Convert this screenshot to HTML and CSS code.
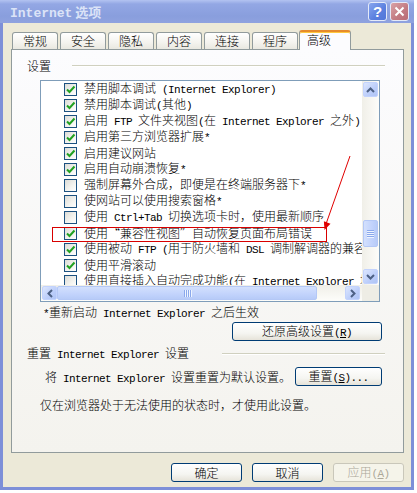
FILE: index.html
```html
<!DOCTYPE html>
<html>
  <head>
    <meta charset="UTF-8" />
    <title>Internet 选项</title>
    <link rel="stylesheet" href="styles.css">
  </head>
  <body>
    <div class="window">
      <div class="titlebar">
        <span class="title"><span class="title-en">Internet</span> 选项</span>
        <span class="cap-btn cap-help">?</span>
        <span class="cap-btn cap-close">
          <svg width="11" height="11" viewBox="0 0 11 11"><path d="M1.5 1.5 L9.5 9.5 M9.5 1.5 L1.5 9.5" stroke="#fff" stroke-width="2" /></svg>
        </span>
      </div>

      <div class="client">
        <div class="tabs">
          <div class="tab">常规</div>
          <div class="tab">安全</div>
          <div class="tab">隐私</div>
          <div class="tab">内容</div>
          <div class="tab">连接</div>
          <div class="tab">程序</div>
          <div class="tab tab-active">高级</div>
        </div>

        <div class="page">
          <div class="group-head">
            <span>设置</span>
            <i class="etch etch-long"></i>
          </div>

          <div class="listbox">
            <div class="items">
              <div class="item"><span class="chk"><svg viewBox="0 0 11 11"><path d="M2 5.5 L4.5 8 L9.5 2.5" /></svg></span><span>禁用脚本调试<span class="en"> (Internet Explorer)</span></span></div>
              <div class="item"><span class="chk"><svg viewBox="0 0 11 11"><path d="M2 5.5 L4.5 8 L9.5 2.5" /></svg></span><span>禁用脚本调试<span class="en">(</span>其他<span class="en">)</span></span></div>
              <div class="item"><span class="chk"><svg viewBox="0 0 11 11"><path d="M2 5.5 L4.5 8 L9.5 2.5" /></svg></span><span>启用<span class="en"> FTP </span>文件夹视图<span class="en">(</span>在<span class="en"> Internet Explorer </span>之外<span class="en">)</span></span></div>
              <div class="item"><span class="chk"><svg viewBox="0 0 11 11"><path d="M2 5.5 L4.5 8 L9.5 2.5" /></svg></span><span>启用第三方浏览器扩展<span class="en">*</span></span></div>
              <div class="item"><span class="chk"><svg viewBox="0 0 11 11"><path d="M2 5.5 L4.5 8 L9.5 2.5" /></svg></span><span>启用建议网站</span></div>
              <div class="item"><span class="chk"><svg viewBox="0 0 11 11"><path d="M2 5.5 L4.5 8 L9.5 2.5" /></svg></span><span>启用自动崩溃恢复<span class="en">*</span></span></div>
              <div class="item"><span class="chk"></span><span>强制屏幕外合成，即便是在终端服务器下<span class="en">*</span></span></div>
              <div class="item"><span class="chk"></span><span>使网站可以使用搜索窗格<span class="en">*</span></span></div>
              <div class="item"><span class="chk"></span><span>使用<span class="en"> Ctrl+Tab </span>切换选项卡时，使用最新顺序</span></div>
              <div class="item"><span class="chk"><svg viewBox="0 0 11 11"><path d="M2 5.5 L4.5 8 L9.5 2.5" /></svg></span><span>使用“兼容性视图”自动恢复页面布局错误</span></div>
              <div class="item"><span class="chk"><svg viewBox="0 0 11 11"><path d="M2 5.5 L4.5 8 L9.5 2.5" /></svg></span><span>使用被动<span class="en"> FTP (</span>用于防火墙和<span class="en"> DSL </span>调制解调器的兼容性<span class="en">)</span></span></div>
              <div class="item"><span class="chk"><svg viewBox="0 0 11 11"><path d="M2 5.5 L4.5 8 L9.5 2.5" /></svg></span><span>使用平滑滚动</span></div>
              <div class="item"><span class="chk"></span><span>使用直接插入自动完成功能<span class="en">(</span>在<span class="en"> Internet Explorer </span>地址栏和打开对话框中<span class="en">)</span></span></div>
            </div>

            <div class="vscroll">
              <span class="sb-btn">
                <svg width="9" height="6" viewBox="0 0 9 6"><path d="M1 5 L4.5 1.5 L8 5" /></svg>
              </span>
              <span class="vthumb"><i></i><i></i><i></i><i></i></span>
              <span class="sb-btn sb-end">
                <svg width="9" height="6" viewBox="0 0 9 6"><path d="M1 1 L4.5 4.5 L8 1" /></svg>
              </span>
            </div>
            <div class="hscroll">
              <span class="sb-btn">
                <svg width="6" height="9" viewBox="0 0 6 9"><path d="M5 1 L1.5 4.5 L5 8" /></svg>
              </span>
              <span class="hthumb"><i></i><i></i><i></i><i></i></span>
              <span class="sb-btn sb-end">
                <svg width="6" height="9" viewBox="0 0 6 9"><path d="M1 1 L4.5 4.5 L1 8" /></svg>
              </span>
            </div>
            <div class="corner"></div>
          </div>

          <div class="note"><span class="en">*</span>重新启动<span class="en"> Internet Explorer </span>之后生效</div>

          <div class="btn-row restore-row">
            <button class="xp-btn btn-restore">还原高级设置<span class="en">(<u>R</u>)</span></button>
          </div>

          <div class="group-head reset-head">
            <span>重置<span class="en"> Internet Explorer </span>设置</span>
            <i class="etch etch-short"></i>
          </div>

          <div class="btn-row reset-row">
            <span class="reset-text">将<span class="en"> Internet Explorer </span>设置重置为默认设置。</span>
            <button class="xp-btn btn-reset">重置<span class="en">(<u>S</u>)...</span></button>
          </div>

          <div class="hint">仅在浏览器处于无法使用的状态时，才使用此设置。</div>

          <svg class="marks" width="392" height="402" viewBox="0 0 392 402">
            <rect x="40.5" y="177.5" width="274" height="14" fill="none" stroke="#d80000" />
            <path d="M338 106 L314 174" stroke="#e00000" stroke-width="1" />
            <polygon points="312.5,180 318.5,173.7 311.9,171.3" fill="#e00000" />
          </svg>
        </div>

        <div class="dlg-btns">
          <button class="xp-btn dlg-btn">确定</button>
          <button class="xp-btn dlg-btn">取消</button>
          <button class="xp-btn dlg-btn" disabled>应用<span class="en">(<u>A</u>)</span></button>
        </div>
      </div>
    </div>
  </body>
</html>
```

FILE: styles.css
```css
body {
  margin: 0;
  background: #fff;
  font-family: "Noto Sans CJK SC", sans-serif;
  font-size: 12px;
  font-weight: 300;
  color: #000;
}

/* latin runs: monospace 6px cells like the old song font */
.en {
  font-family: "Liberation Mono", monospace;
  font-size: 11px;
  font-weight: normal;
  letter-spacing: -0.6px;
}

.window {
  width: 414px;
  height: 490px;
  background: #7d8fd8;
  display: flex;
  flex-direction: column;
}

.titlebar {
  height: 23px;
  flex-shrink: 0;
  display: flex;
  align-items: center;
  gap: 3px;
  padding: 0 5px 0 10px;
  background: linear-gradient(#b3c3f1, #93a7e4 4px, #899edd 70%, #8fa2df);
}
.title {
  flex: 1;
  color: #dbe3f7;
  font-size: 13px;
  font-weight: bold;
}
.title-en {
  font-family: "Liberation Mono", monospace;
}
.cap-btn {
  width: 19px;
  height: 19px;
  box-sizing: border-box;
  border: 1px solid #e4eaf9;
  border-radius: 3px;
  display: flex;
  align-items: center;
  justify-content: center;
  color: #fff;
  font-family: "Liberation Sans", sans-serif;
  font-weight: bold;
  font-size: 15px;
}
.cap-help {
  background: linear-gradient(135deg, #88a6ee, #5a7fdf 60%, #5276d8);
}
.cap-close {
  background: linear-gradient(135deg, #d9a2a6, #c27a82 60%, #b96d76);
}

.client {
  flex: 1;
  margin: 0 3px 3px;
  padding: 7px 7px 5px 8px;
  background: #ece9d8;
  display: flex;
  flex-direction: column;
}

.tabs {
  display: flex;
  gap: 2px;
  height: 20px;
  margin: 0 0 -1px 1px;
  position: relative;
  z-index: 1;
}
.tab {
  width: 46px;
  height: 17px;
  margin-top: 2px;
  box-sizing: border-box;
  border: 1px solid #919b9c;
  border-bottom: none;
  border-radius: 3px 3px 0 0;
  background: linear-gradient(#fff, #f4f3ee 60%, #e9e8e0);
  text-align: center;
  line-height: 16px;
}
.tab-active {
  width: 52px;
  height: 20px;
  margin-top: 0;
  margin-left: -1px;
  border-top: 2px solid #e68b2c;
  box-shadow: inset 0 1px #ffc83c;
  background: #fcfcfe;
  text-align: left;
  padding-left: 7px;
}

.page {
  height: 404px;
  box-sizing: border-box;
  border: 1px solid #919b9c;
  background: linear-gradient(#fcfcfe, #f4f3ee);
  position: relative;
}

.group-head {
  display: flex;
  align-items: center;
  height: 16px;
  line-height: 16px;
  margin: 8px 18px 0 0;
  padding-left: 15px;
}
.etch {
  margin-left: auto;
  height: 0;
  border-top: 1px solid #d0d0bf;
  border-bottom: 1px solid #fff;
}
.etch-long {
  width: 313px;
}
.etch-short {
  width: 163px;
}

.listbox {
  width: 340px;
  height: 222px;
  margin: 6px 0 0 28px;
  box-sizing: border-box;
  border: 1px solid #7f9db9;
  background: #fff;
  display: grid;
  grid-template-columns: 1fr 17px;
  grid-template-rows: 1fr 16px;
}
.items {
  overflow: hidden;
  white-space: nowrap;
}
.item {
  display: flex;
  align-items: center;
  gap: 7px;
  height: 16px;
  line-height: 16px;
  padding-left: 23px;
}
.chk {
  width: 13px;
  height: 13px;
  flex-shrink: 0;
  box-sizing: border-box;
  border: 1px solid #1c5180;
  background: linear-gradient(135deg, #dcdcd7, #f4f4f0 60%, #fff);
}
.chk svg {
  display: block;
  width: 11px;
  height: 11px;
  fill: none;
  stroke: #21a121;
  stroke-width: 2;
}

.vscroll {
  display: flex;
  flex-direction: column;
  padding: 1px;
  background: linear-gradient(to right, #f0efe8, #fdfdfa);
}
.hscroll {
  display: flex;
  padding: 1px;
  background: linear-gradient(#f0efe8, #fdfdfa);
}
.corner {
  background: #eeede5;
}
.sb-btn {
  width: 15px;
  height: 15px;
  box-sizing: border-box;
  border: 1px solid #c3d3fd;
  border-radius: 2px;
  background: linear-gradient(135deg, #dce6fe, #bccefa 60%, #afc4f5);
  display: flex;
  align-items: center;
  justify-content: center;
  flex-shrink: 0;
}
.hscroll .sb-btn {
  height: 14px;
}
.sb-btn svg {
  fill: none;
  stroke: #4d6185;
  stroke-width: 2;
}
.sb-end {
  margin-top: auto;
}
.hscroll .sb-end {
  margin-top: 0;
  margin-left: auto;
  margin-right: 1px;
}
.vthumb,
.hthumb {
  box-sizing: border-box;
  border: 1px solid #b4c8f6;
  border-radius: 2px;
  display: flex;
  align-items: center;
  justify-content: center;
  gap: 1px;
}
.vthumb {
  height: 27px;
  margin-top: 123px;
  flex-direction: column;
  background: linear-gradient(to right, #d3e0fd, #c2d3fc 60%, #b7cbf8);
}
.hthumb {
  width: 260px;
  background: linear-gradient(#d3e0fd, #c2d3fc 60%, #b7cbf8);
}
.vthumb i {
  width: 7px;
  height: 1px;
  background: #8aa8ec;
  box-shadow: 0 1px #eef4fe;
}
.hthumb i {
  width: 1px;
  height: 7px;
  background: #8aa8ec;
  box-shadow: 1px 0 #eef4fe;
}

.note {
  margin-top: 2px;
  padding-left: 31px;
  height: 16px;
  line-height: 16px;
}

.btn-row {
  display: flex;
  align-items: center;
  padding-right: 21px;
}
.restore-row {
  justify-content: flex-end;
  margin-top: 2px;
}
.reset-head {
  margin-top: 5px;
}
.reset-row {
  margin-top: 5px;
  padding-left: 33px;
}
.reset-row .xp-btn {
  margin-left: auto;
}

.xp-btn {
  height: 19px;
  padding: 0;
  box-sizing: border-box;
  border: 1px solid #003c74;
  border-radius: 3px;
  background: linear-gradient(#fff, #f5f5f1 60%, #e6e3d9);
  font: inherit;
  line-height: 16px;
  color: #000;
  text-align: center;
}
.xp-btn:disabled {
  border-color: #c9c7ba;
  background: #f5f4ea;
  color: #aca899;
}
.btn-restore {
  width: 150px;
}
.btn-reset {
  width: 87px;
}

.hint {
  margin-top: 11px;
  padding-left: 28px;
  height: 16px;
  line-height: 16px;
}

.marks {
  position: absolute;
  left: 0;
  top: 0;
  pointer-events: none;
}

.dlg-btns {
  display: flex;
  justify-content: flex-end;
  gap: 10px;
  margin-top: 10px;
}
.dlg-btn {
  width: 71px;
}
```
